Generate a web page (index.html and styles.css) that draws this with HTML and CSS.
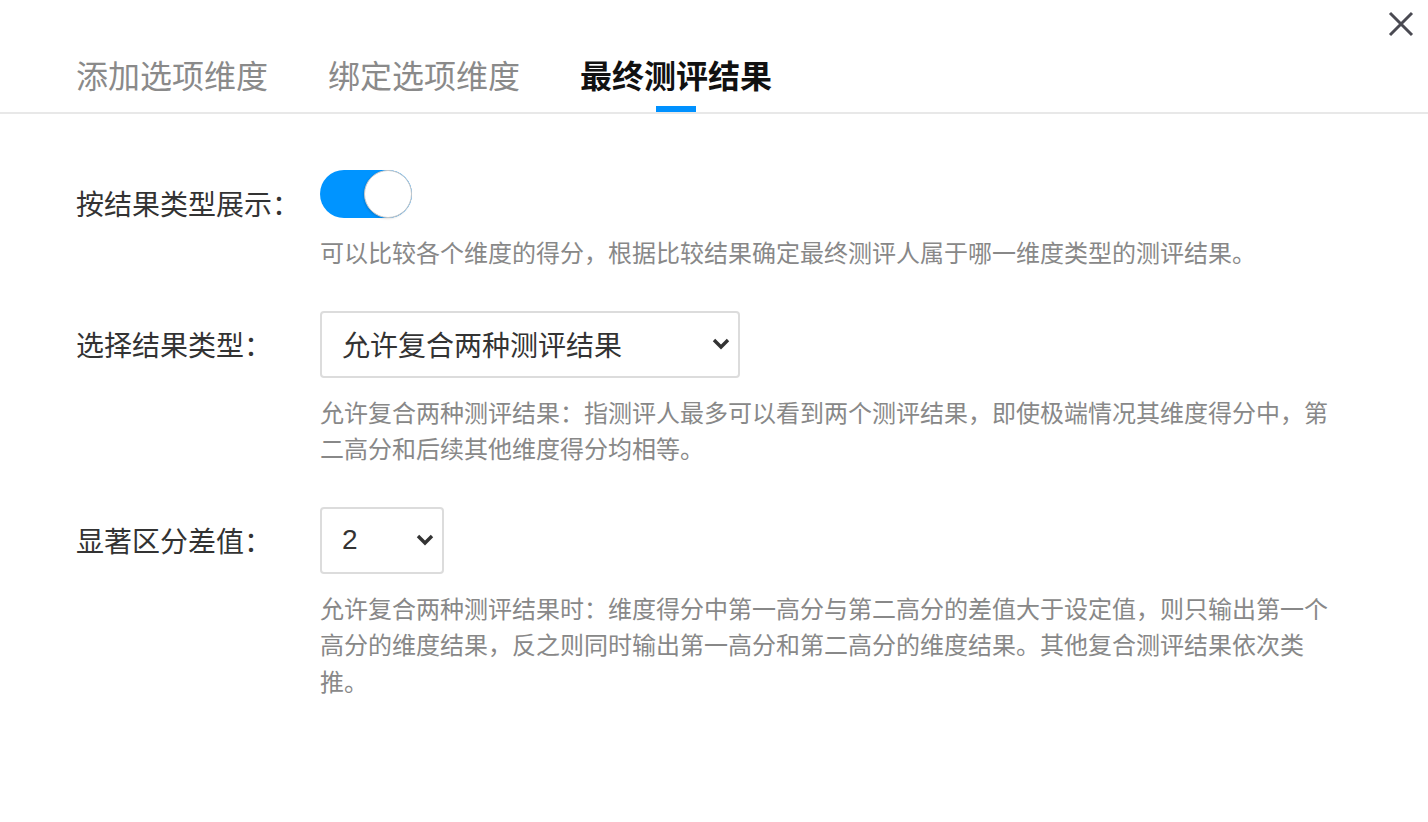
FILE: index.html
```html
<!DOCTYPE html>
<html lang="zh-CN">
<head>
<meta charset="utf-8">
<title>最终测评结果</title>
<link rel="stylesheet" href="styles.css">
</head>
<body>
<div class="dialog">
  <button class="close" aria-label="关闭">
    <svg width="26" height="26" viewBox="0 0 26 26"><path d="M2 2 L24 24 M24 2 L2 24" stroke="#4a4a52" stroke-width="3" stroke-linecap="butt" fill="none"/></svg>
  </button>
  <nav class="tabs">
    <div class="tab">添加选项维度</div>
    <div class="tab">绑定选项维度</div>
    <div class="tab active">最终测评结果</div>
  </nav>
  <div class="form">
    <div class="row">
      <div class="label">按结果类型展示：</div>
      <div class="field">
        <div class="switch on"><span class="knob"></span></div>
        <p class="desc">可以比较各个维度的得分，根据比较结果确定最终测评人属于哪一维度类型的测评结果。</p>
      </div>
    </div>
    <div class="row">
      <div class="label">选择结果类型：</div>
      <div class="field">
        <div class="select wide">
          <span class="value">允许复合两种测评结果</span>
          <svg class="chev" width="18" height="12" viewBox="0 0 18 12"><path d="M2 2 L9 9 L16 2" stroke="#333" stroke-width="3.4" fill="none"/></svg>
        </div>
        <p class="desc">允许复合两种测评结果：指测评人最多可以看到两个测评结果，即使极端情况其维度得分中，第二高分和后续其他维度得分均相等。</p>
      </div>
    </div>
    <div class="row">
      <div class="label">显著区分差值：</div>
      <div class="field">
        <div class="select narrow">
          <span class="value">2</span>
          <svg class="chev" width="18" height="12" viewBox="0 0 18 12"><path d="M2 2 L9 9 L16 2" stroke="#333" stroke-width="3.4" fill="none"/></svg>
        </div>
        <p class="desc">允许复合两种测评结果时：维度得分中第一高分与第二高分的差值大于设定值，则只输出第一个高分的维度结果，反之则同时输出第一高分和第二高分的维度结果。其他复合测评结果依次类推。</p>
      </div>
    </div>
  </div>
</div>
</body>
</html>
```
FILE: styles.css
```css
* { box-sizing: border-box; }
html, body {
  margin: 0;
  padding: 0;
  background: #fff;
}
body {
  font-family: "Liberation Sans", "Noto Sans CJK SC", sans-serif;
  color: #333;
}
.dialog {
  position: relative;
  width: 1428px;
  height: 822px;
  background: #fff;
}
.close {
  position: absolute;
  top: 11px;
  right: 14px;
  width: 26px;
  height: 26px;
  padding: 0;
  border: 0;
  background: transparent;
  display: flex;
}
.tabs {
  display: flex;
  gap: 60px;
  padding-left: 76px;
  height: 114px;
  border-bottom: 2px solid #e8e8e8;
}
.tab {
  position: relative;
  font-family: "Noto Sans CJK SC", sans-serif;
  font-size: 32px;
  line-height: 40px;
  padding-top: 54px;
  height: 112px;
  color: #8a8a8a;
  white-space: nowrap;
}
.tab.active {
  color: #111;
  font-weight: 700;
}
.tab.active::after {
  content: "";
  position: absolute;
  left: 50%;
  bottom: 0;
  width: 40px;
  height: 6px;
  margin-left: -20px;
  background: #0091ff;
}
.form {
  padding: 56px 0 0 76px;
  display: flex;
  flex-direction: column;
  gap: 40px;
}
.row {
  display: grid;
  grid-template-columns: 244px 1020px;
  align-items: start;
}
.label {
  font-family: "Noto Sans CJK SC", sans-serif;
  font-size: 28px;
  line-height: 67px;
  color: #333;
  white-space: nowrap;
}
.field {
  display: flex;
  flex-direction: column;
  align-items: flex-start;
}
.switch {
  width: 92px;
  height: 48px;
  border-radius: 24px;
  background: #0094ff;
  display: flex;
  justify-content: flex-end;
}
.knob {
  width: 48px;
  height: 48px;
  border-radius: 50%;
  background: #fff;
  border: 1px solid #c8c8c8;
  box-shadow: -1px 1px 2px rgba(0,0,0,0.12);
}
.select {
  height: 67px;
  border: 2px solid #dcdcdc;
  border-radius: 4px;
  display: flex;
  align-items: center;
  justify-content: space-between;
  padding: 0 8px 0 20px;
  background: #fff;
}
.select.wide { width: 420px; }
.select.narrow { width: 124px; }
.value {
  font-size: 28px;
  color: #333;
  font-family: "Liberation Sans", "Noto Sans CJK SC", sans-serif;
}
.chev { display: block; }
.desc {
  margin: 16px 0 0;
  font-family: "Noto Sans CJK SC", sans-serif;
  font-size: 24px;
  line-height: 36.5px;
  color: #888;
  width: 1020px;
}
```
